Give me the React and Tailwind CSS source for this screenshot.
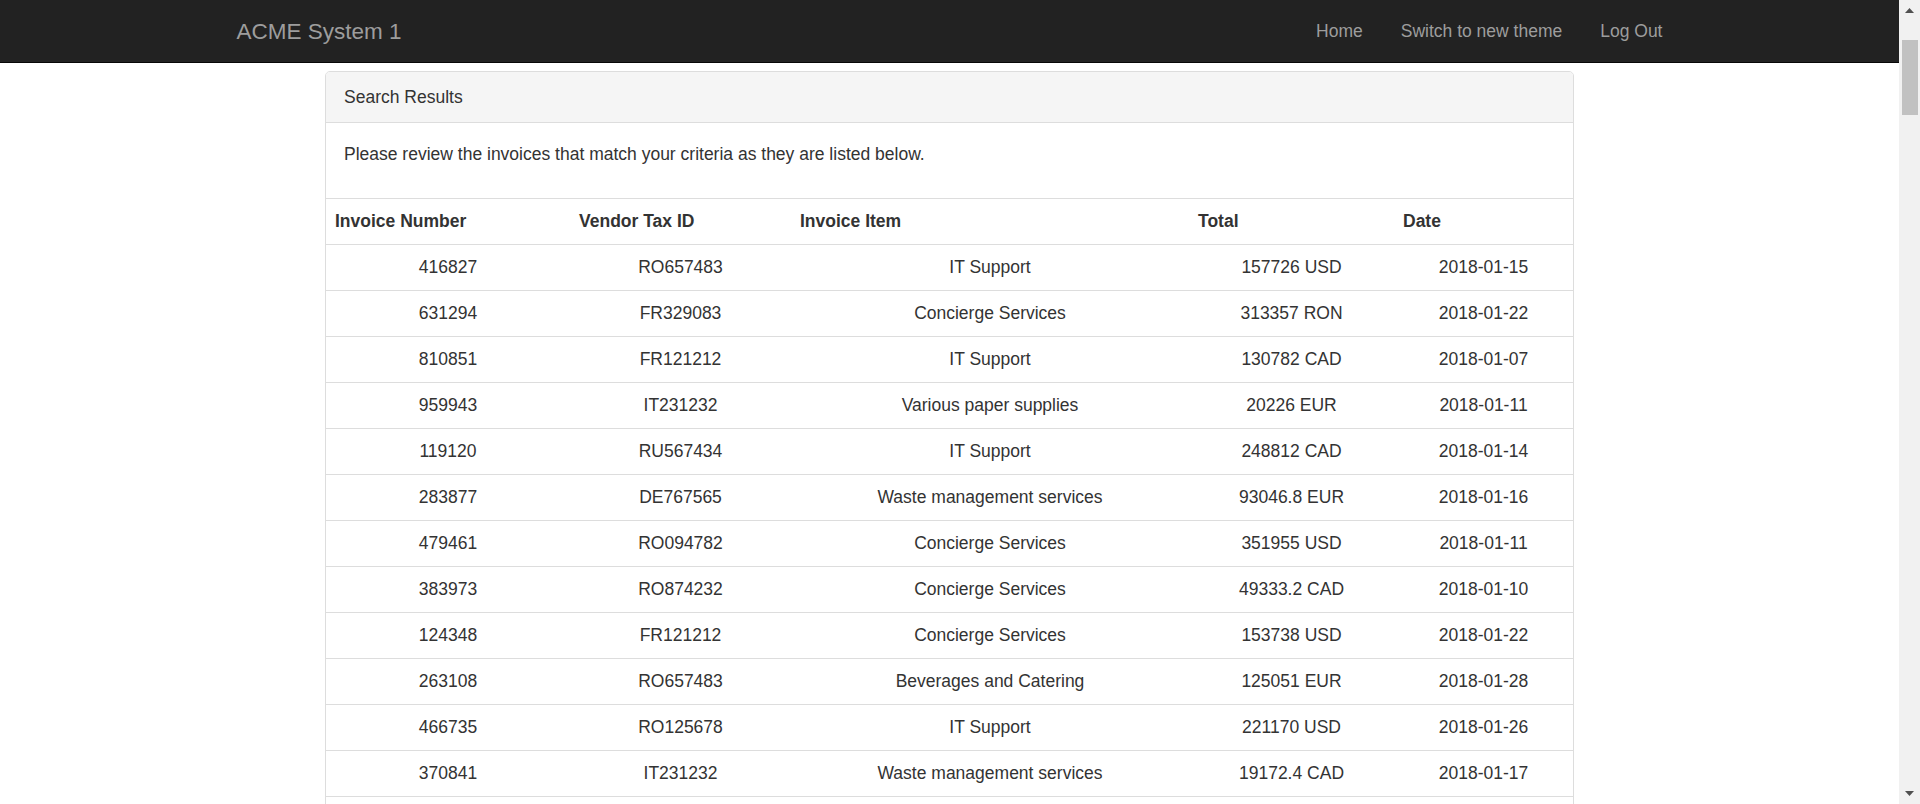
import React from 'react';

const ROWS = [
  ['416827', 'RO657483', 'IT Support', '157726 USD', '2018-01-15'],
  ['631294', 'FR329083', 'Concierge Services', '313357 RON', '2018-01-22'],
  ['810851', 'FR121212', 'IT Support', '130782 CAD', '2018-01-07'],
  ['959943', 'IT231232', 'Various paper supplies', '20226 EUR', '2018-01-11'],
  ['119120', 'RU567434', 'IT Support', '248812 CAD', '2018-01-14'],
  ['283877', 'DE767565', 'Waste management services', '93046.8 EUR', '2018-01-16'],
  ['479461', 'RO094782', 'Concierge Services', '351955 USD', '2018-01-11'],
  ['383973', 'RO874232', 'Concierge Services', '49333.2 CAD', '2018-01-10'],
  ['124348', 'FR121212', 'Concierge Services', '153738 USD', '2018-01-22'],
  ['263108', 'RO657483', 'Beverages and Catering', '125051 EUR', '2018-01-28'],
  ['466735', 'RO125678', 'IT Support', '221170 USD', '2018-01-26'],
  ['370841', 'IT231232', 'Waste management services', '19172.4 CAD', '2018-01-17'],
];

const HEADERS = ['Invoice Number', 'Vendor Tax ID', 'Invoice Item', 'Total', 'Date'];
const WIDTHS = ['w-[244px]', 'w-[221px]', 'w-[398px]', 'w-[205px]', 'w-[179px]'];

function Scrollbar() {
  return (
    <aside className="w-[21px] shrink-0 h-full bg-[#f1f1f1] flex flex-col items-center">
      <div className="h-[21px] flex items-center justify-center">
        <svg width="9" height="5" viewBox="0 0 9 5"><path d="M0 5 L4.5 0 L9 5 Z" fill="#505050" /></svg>
      </div>
      <div className="mt-[19px] w-[16px] h-[75px] bg-[#c1c1c1]" />
      <div className="flex-1" />
      <div className="h-[21px] flex items-center justify-center">
        <svg width="9" height="5" viewBox="0 0 9 5"><path d="M0 0 L9 0 L4.5 5 Z" fill="#505050" /></svg>
      </div>
    </aside>
  );
}

export default function App() {
  return (
    <div className="h-screen flex overflow-hidden bg-white text-[#333] text-[17.5px] leading-[25px]" style={{ fontFamily: '"Liberation Sans", Arial, sans-serif' }}>
      <main className="flex-1 min-w-0 overflow-hidden">
        {/* Navbar */}
        <nav className="h-[63px] bg-[#222] border-b border-[#080808]">
          <div className="mx-auto w-[1462px] px-[18px] h-full flex items-center">
            <span className="text-[22.5px] text-[#9d9d9d]">ACME System 1</span>
            <ul className="ml-auto flex items-center -mr-[19px]">
              {['Home', 'Switch to new theme', 'Log Out'].map((l) => (
                <li key={l} className="px-[19px] text-[#9d9d9d]">{l}</li>
              ))}
            </ul>
          </div>
        </nav>

        {/* Search results panel */}
        <div className="mx-auto w-[1249px] mt-[8px] border border-[#ddd] rounded-[5px] overflow-hidden">
          <div className="bg-[#f5f5f5] border-b border-[#ddd] px-[18px] py-[12.5px]">Search Results</div>
          <div className="px-[18px] pt-[19px] pb-[18px]">
            <p className="mb-[12.5px]">Please review the invoices that match your criteria as they are listed below.</p>
          </div>
          <table className="w-full border-collapse">
            <thead>
              <tr className="border-t border-b border-[#ddd]">
                {HEADERS.map((h, i) => (
                  <th key={h} className={`${WIDTHS[i]} text-left font-bold px-[9px] py-[10px]`}>{h}</th>
                ))}
              </tr>
            </thead>
            <tbody>
              {ROWS.map((r) => (
                <tr key={r[0] + r[3]} className="border-t border-[#ddd]">
                  {r.map((c, i) => (
                    <td key={i} className="text-center px-[9px] py-[10px]">{c}</td>
                  ))}
                </tr>
              ))}
              <tr className="border-t border-[#ddd]">
                <td colSpan={5} className="h-[46px]" />
              </tr>
            </tbody>
          </table>
        </div>
      </main>
      <Scrollbar />
    </div>
  );
}
